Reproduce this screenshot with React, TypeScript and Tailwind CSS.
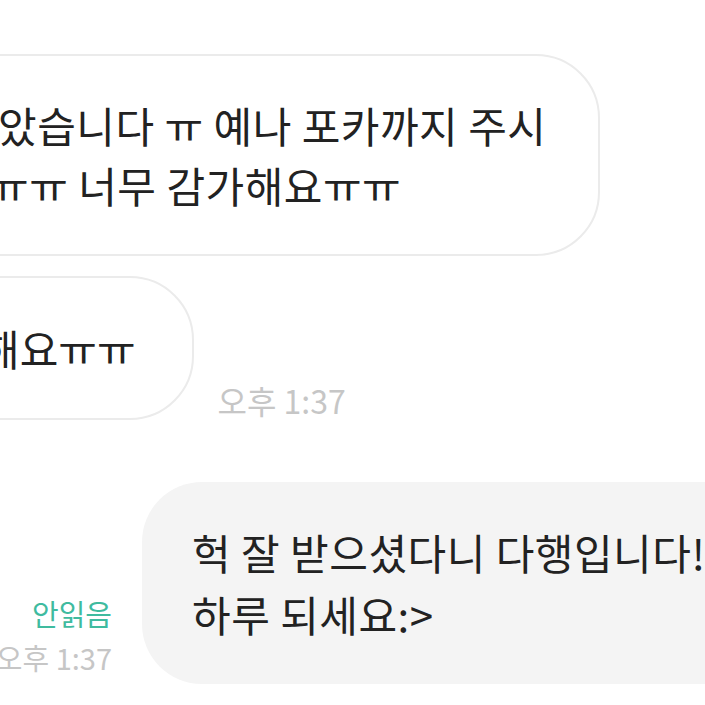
export default function App() {
  return (
    <div
      className="relative h-[705px] w-[705px] overflow-hidden bg-white text-[#222222]"
      style={{ fontFamily: '"Noto Sans CJK KR", "Noto Sans", sans-serif' }}
    >
      <div className="flex flex-col pt-[54px]">
        {/* received */}
        <div className="flex">
          <div className="-ml-[100px] shrink-0 whitespace-nowrap rounded-[64px] border-2 border-[#ebebeb] py-[39px] pl-[100px] pr-[52px] text-[42px] leading-[60px] tracking-[0.5px]">
            <div className="-ml-[4px]">았습니다 ㅠ 예나 포카까지 주시</div>
            <div className="-ml-[12px]">ㅠㅠ 너무 감가해요ㅠㅠ</div>
          </div>
        </div>

        <div className="mt-[20px] flex items-end gap-[28px]">
          <div className="-ml-[100px] shrink-0 whitespace-nowrap rounded-[64px] border-2 border-[#ebebeb] py-[40px] pl-[100px] pr-[56px] text-[42px] leading-[60px]">
            <div className="-ml-[21px]">해요ㅠㅠ</div>
          </div>
          <span className="-ml-[4px] pb-[2px] text-[32px] leading-[36px] text-[#c6c6c6]">오후 1:37</span>
        </div>

        {/* sent */}
        <div className="mt-[62px] flex items-end">
          <div className="mr-[30px] flex w-[112px] shrink-0 flex-col items-end whitespace-nowrap pb-[5px] text-[29px] leading-[44px]">
            <span className="text-[#3fbb9f]">안읽음</span>
            <span className="text-[#c6c6c6]">오후 1:37</span>
          </div>
          <div className="shrink-0 whitespace-nowrap rounded-[60px] bg-[#f4f4f4] py-[39px] pl-[50px] pr-[80px] text-[42px] leading-[62px] tracking-[0.5px]">
            <div>헉 잘 받으셨다니 다행입니다!</div>
            <div>하루 되세요:&gt;</div>
          </div>
        </div>
      </div>
    </div>
  )
}
